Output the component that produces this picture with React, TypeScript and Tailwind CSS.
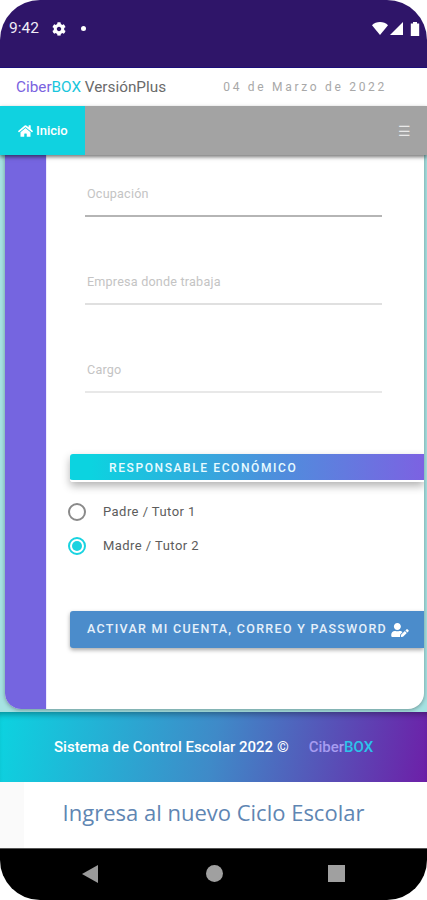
import { FaHome, FaUserEdit, FaCog } from "react-icons/fa";

function Field({ label, line, first }: { label: string; line: string; first?: boolean }) {
  return (
    <div className={`${first ? "h-[62px]" : "h-[88px]"} shrink-0 flex flex-col justify-end`}>
      <div className={`ml-[38px] mr-[42px] h-[51px] border-b-2 ${line} pl-[2px] pt-[20px] text-[12.6px] leading-[16px] text-[#c4c4c4] tracking-[0.2px]`}>
        {label}
      </div>
    </div>
  );
}

function Radio({ label, on }: { label: string; on?: boolean }) {
  return (
    <div className="flex items-center h-[34px] ml-[21px]">
      <div className={`w-[18px] h-[18px] rounded-full border-2 flex items-center justify-center ${on ? "border-[#19d3e0]" : "border-[#8a8a8a]"}`}>
        {on && <div className="w-[10px] h-[10px] rounded-full bg-[#19d3e0]" />}
      </div>
      <span className="ml-[17px] text-[13px] text-[#5c5c5c] tracking-[0.45px]">{label}</span>
    </div>
  );
}

export default function App() {
  return (
    <div className="w-[427px] h-[900px] bg-white flex flex-col overflow-hidden font-['Roboto',sans-serif]">
      {/* status bar */}
      <div className="h-[68px] shrink-0 bg-[#2f1569] rounded-t-[40px] border-b border-[#1c0f7a] flex items-start justify-between pl-[9px] pr-[7px] pt-[19px] text-white">
        <div className="flex items-center h-[19px]">
          <span className="text-[15.5px] leading-[19px] text-[#f0edf6]">9:42</span>
          <FaCog className="ml-[13px] w-[14px] h-[14px]" />
          <span className="ml-[15px] w-[5px] h-[5px] rounded-full bg-white" />
        </div>
        <div className="flex items-center h-[19px]">
          <svg width="16" height="13" viewBox="0 0 16 13"><path d="M0 3.2C2 1.2 5 0 8 0s6 1.2 8 3.2L8 13z" fill="#fff" /></svg>
          <svg className="ml-[2px]" width="13" height="13" viewBox="0 0 13 13"><path d="M13 0v13H0z" fill="#fff" /></svg>
          <svg className="ml-[7px]" width="10" height="14" viewBox="0 0 10 14"><path d="M3 0h4v1.5h2.2V14H.8V1.5H3z" fill="#fff" /></svg>
        </div>
      </div>

      {/* brand header */}
      <div className="h-[38px] shrink-0 bg-white flex items-center justify-between pl-[16px] pr-[40px]">
        <div className="text-[15.3px] leading-[20px]">
          <span className="text-[#7a63e0]">Ciber</span>
          <span className="text-[#19c6dc]">BOX</span>
          <span className="text-[#6a6a6a]"> VersiónPlus</span>
        </div>
        <div className="text-[12px] tracking-[2.7px] text-[#a8a8a8]">04 de Marzo de 2022</div>
      </div>

      {/* nav */}
      <div className="relative z-10 h-[49px] shrink-0 bg-[#a3a3a3] shadow-[0_2px_4px_rgba(0,0,0,0.55)] flex items-center justify-between pr-[16px]">
        <div className="w-[85px] h-full bg-[#10d2e0] flex items-center pl-[18px] gap-[3px] text-white">
          <FaHome className="w-[15px] h-[14px]" />
          <span className="text-[13px] font-medium">Inicio</span>
        </div>
        <span className="text-[14px] leading-none text-[#e8e8e8]">☰</span>
      </div>

      {/* content */}
      <div className="h-[557px] shrink-0 bg-[#a6e2e2] pl-[5px] pr-[3px] pb-[3px]">
        <div className="h-full rounded-b-[16px] overflow-hidden flex bg-white shadow-[0_1px_4px_rgba(0,0,0,0.35)]">
          <div className="w-[41px] shrink-0 bg-[#7565e0]" />
          <div className="flex-1 flex flex-col border-l border-[#eeeaff] overflow-hidden">
            <Field first label="Ocupación" line="border-[#b5b5b5]" />
            <Field label="Empresa donde trabaja" line="border-[#e0e0e0]" />
            <Field label="Cargo" line="border-[#e8e8e8]" />
            <div className="ml-[23px] mt-[61px] shrink-0 h-[28px] pt-[2px] rounded-l-[3px] border-b-2 border-white bg-[linear-gradient(90deg,#0cd3e0_6%,#4a92dc_55%,#7c62e2_100%)] shadow-[0_4px_8px_rgba(0,0,0,0.3)] flex items-center pl-[39px] text-[12px] font-medium text-[#e8fbff] tracking-[1.6px]">
              RESPONSABLE ECONÓMICO
            </div>
            <div className="mt-[13px] flex flex-col shrink-0">
              <Radio label="Padre / Tutor 1" />
              <Radio label="Madre / Tutor 2" on />
            </div>
            <div className="ml-[23px] mt-[48px] shrink-0 h-[37px] rounded-l-[3px] bg-[#4b8ccb] shadow-[0_2px_4px_rgba(0,0,0,0.35)] flex items-center pl-[17px] text-white">
              <span className="text-[12.5px] font-medium tracking-[1.3px] whitespace-nowrap text-[#e6f0fa]">ACTIVAR MI CUENTA, CORREO Y PASSWORD</span>
              <FaUserEdit className="ml-[4px] w-[18px] h-[14px] shrink-0" />
            </div>
          </div>
        </div>
      </div>

      {/* footer */}
      <div className="h-[70px] shrink-0 bg-[linear-gradient(100deg,#0cd3e0_0%,#3f8ac8_50%,#6d1fa8_100%)] flex items-center pl-[54px] pt-[1px] shadow-[inset_0_6px_6px_-4px_rgba(0,0,0,0.35)]">
        <span className="text-[15px] font-medium text-white">Sistema de Control Escolar 2022 ©</span>
        <span className="ml-[20px] text-[15px] font-medium">
          <span className="text-[#a79cf0]">Ciber</span>
          <span className="text-[#2cc3ea]">BOX</span>
        </span>
      </div>

      {/* ad */}
      <div className="h-[66px] shrink-0 bg-[#fafafa] flex pl-[24px]">
        <div className="flex-1 bg-white flex items-center justify-center pb-[6px] pr-[24px]">
          <span className="text-[22px] text-[#5f86b3] font-['Open_Sans',sans-serif]">Ingresa al nuevo Ciclo Escolar</span>
        </div>
      </div>

      {/* android nav */}
      <div className="h-[52px] shrink-0 bg-black rounded-b-[40px] border-t border-[#555] flex items-start pt-[16px] pl-[82px]">
        <svg width="16" height="18" viewBox="0 0 16 18"><path d="M16 0v18L0 9z" fill="#9a9a9a" /></svg>
        <div className="ml-[108px] w-[17px] h-[17px] rounded-full bg-[#a0a0a0]" />
        <div className="ml-[105px] w-[17px] h-[17px] bg-[#a0a0a0]" />
      </div>
    </div>
  );
}
